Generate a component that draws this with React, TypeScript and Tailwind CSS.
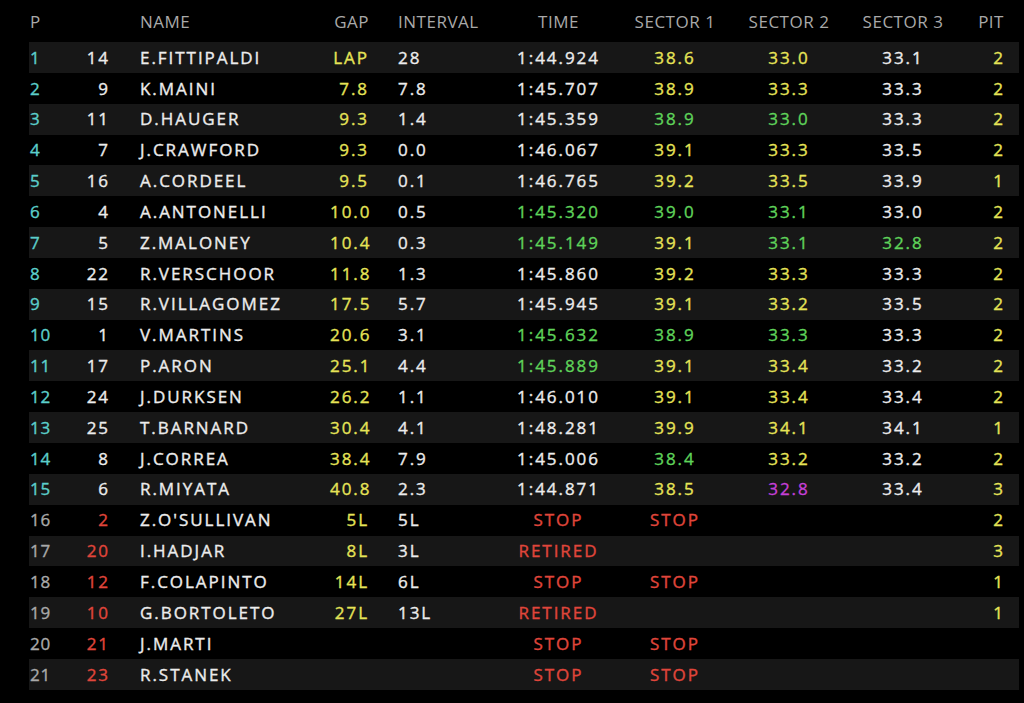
type C = 'w' | 'y' | 'g' | 'p' | 'r' | '';

interface Row {
    pos: number;
    num: string;
    numRed?: boolean;
    name: string;
    gap: string;
    interval: string;
    time: [string, C];
    s1: [string, C];
    s2: [string, C];
    s3: [string, C];
    pit: string;
}

const colorClass: Record<C, string> = {
    w: 'text-[#ececec]',
    y: 'text-[#e6e457]',
    g: 'text-[#5fd35a]',
    p: 'text-[#c640d8]',
    r: 'text-[#e0463b]',
    '': '',
};

const rows: Row[] = [
    { pos: 1, num: '14', name: 'E.FITTIPALDI', gap: 'LAP', interval: '28', time: ['1:44.924', 'w'], s1: ['38.6', 'y'], s2: ['33.0', 'y'], s3: ['33.1', 'w'], pit: '2' },
    { pos: 2, num: '9', name: 'K.MAINI', gap: '7.8', interval: '7.8', time: ['1:45.707', 'w'], s1: ['38.9', 'y'], s2: ['33.3', 'y'], s3: ['33.3', 'w'], pit: '2' },
    { pos: 3, num: '11', name: 'D.HAUGER', gap: '9.3', interval: '1.4', time: ['1:45.359', 'w'], s1: ['38.9', 'g'], s2: ['33.0', 'g'], s3: ['33.3', 'w'], pit: '2' },
    { pos: 4, num: '7', name: 'J.CRAWFORD', gap: '9.3', interval: '0.0', time: ['1:46.067', 'w'], s1: ['39.1', 'y'], s2: ['33.3', 'y'], s3: ['33.5', 'w'], pit: '2' },
    { pos: 5, num: '16', name: 'A.CORDEEL', gap: '9.5', interval: '0.1', time: ['1:46.765', 'w'], s1: ['39.2', 'y'], s2: ['33.5', 'y'], s3: ['33.9', 'w'], pit: '1' },
    { pos: 6, num: '4', name: 'A.ANTONELLI', gap: '10.0', interval: '0.5', time: ['1:45.320', 'g'], s1: ['39.0', 'g'], s2: ['33.1', 'g'], s3: ['33.0', 'w'], pit: '2' },
    { pos: 7, num: '5', name: 'Z.MALONEY', gap: '10.4', interval: '0.3', time: ['1:45.149', 'g'], s1: ['39.1', 'y'], s2: ['33.1', 'g'], s3: ['32.8', 'g'], pit: '2' },
    { pos: 8, num: '22', name: 'R.VERSCHOOR', gap: '11.8', interval: '1.3', time: ['1:45.860', 'w'], s1: ['39.2', 'y'], s2: ['33.3', 'y'], s3: ['33.3', 'w'], pit: '2' },
    { pos: 9, num: '15', name: 'R.VILLAGOMEZ', gap: '17.5', interval: '5.7', time: ['1:45.945', 'w'], s1: ['39.1', 'y'], s2: ['33.2', 'y'], s3: ['33.5', 'w'], pit: '2' },
    { pos: 10, num: '1', name: 'V.MARTINS', gap: '20.6', interval: '3.1', time: ['1:45.632', 'g'], s1: ['38.9', 'g'], s2: ['33.3', 'g'], s3: ['33.3', 'w'], pit: '2' },
    { pos: 11, num: '17', name: 'P.ARON', gap: '25.1', interval: '4.4', time: ['1:45.889', 'g'], s1: ['39.1', 'y'], s2: ['33.4', 'y'], s3: ['33.2', 'w'], pit: '2' },
    { pos: 12, num: '24', name: 'J.DURKSEN', gap: '26.2', interval: '1.1', time: ['1:46.010', 'w'], s1: ['39.1', 'y'], s2: ['33.4', 'y'], s3: ['33.4', 'w'], pit: '2' },
    { pos: 13, num: '25', name: 'T.BARNARD', gap: '30.4', interval: '4.1', time: ['1:48.281', 'w'], s1: ['39.9', 'y'], s2: ['34.1', 'y'], s3: ['34.1', 'w'], pit: '1' },
    { pos: 14, num: '8', name: 'J.CORREA', gap: '38.4', interval: '7.9', time: ['1:45.006', 'w'], s1: ['38.4', 'g'], s2: ['33.2', 'y'], s3: ['33.2', 'w'], pit: '2' },
    { pos: 15, num: '6', name: 'R.MIYATA', gap: '40.8', interval: '2.3', time: ['1:44.871', 'w'], s1: ['38.5', 'y'], s2: ['32.8', 'p'], s3: ['33.4', 'w'], pit: '3' },
    { pos: 16, num: '2', numRed: true, name: "Z.O'SULLIVAN", gap: '5L', interval: '5L', time: ['STOP', 'r'], s1: ['STOP', 'r'], s2: ['', ''], s3: ['', ''], pit: '2' },
    { pos: 17, num: '20', numRed: true, name: 'I.HADJAR', gap: '8L', interval: '3L', time: ['RETIRED', 'r'], s1: ['', ''], s2: ['', ''], s3: ['', ''], pit: '3' },
    { pos: 18, num: '12', numRed: true, name: 'F.COLAPINTO', gap: '14L', interval: '6L', time: ['STOP', 'r'], s1: ['STOP', 'r'], s2: ['', ''], s3: ['', ''], pit: '1' },
    { pos: 19, num: '10', numRed: true, name: 'G.BORTOLETO', gap: '27L', interval: '13L', time: ['RETIRED', 'r'], s1: ['', ''], s2: ['', ''], s3: ['', ''], pit: '1' },
    { pos: 20, num: '21', numRed: true, name: 'J.MARTI', gap: '', interval: '', time: ['STOP', 'r'], s1: ['STOP', 'r'], s2: ['', ''], s3: ['', ''], pit: '' },
    { pos: 21, num: '23', numRed: true, name: 'R.STANEK', gap: '', interval: '', time: ['STOP', 'r'], s1: ['STOP', 'r'], s2: ['', ''], s3: ['', ''], pit: '' },
];

const grid =
    'grid grid-cols-[41px_40px_220px_39px_131px_117px_116px_112px_116px_58px] items-center';

export default function App() {
    return (
        <div className="h-[703px] w-[1024px] overflow-hidden bg-black font-['Open_Sans',sans-serif] text-[17px]">
            <div className="ml-[29px] w-[990px]">
                <div className={`${grid} h-[42px] pt-[2px] tracking-[0.03em] text-[#a9a9a9]`}>
                    <div className="pl-px">P</div>
                    <div />
                    <div className="pl-[30px]">NAME</div>
                    <div className="text-right">GAP</div>
                    <div className="pl-[29px]">INTERVAL</div>
                    <div className="text-center">TIME</div>
                    <div className="text-center">SECTOR 1</div>
                    <div className="text-center">SECTOR 2</div>
                    <div className="text-center">SECTOR 3</div>
                    <div className="pr-[15px] text-right">PIT</div>
                </div>

                {rows.map((r) => (
                    <div
                        key={r.pos}
                        className={`${grid} h-[30.85px] tracking-[0.115em] [-webkit-text-stroke:0.35px_currentColor] ${
                            r.pos % 2 === 1 ? 'bg-[#171717]' : 'bg-black'
                        }`}
                    >
                        <div
                            className={`pl-px tracking-[0.04em] ${
                                r.pos <= 15 ? 'text-[#5ccfcb]' : 'text-[#a9a9a9]'
                            }`}
                        >
                            {r.pos}
                        </div>
                        <div className={`text-right ${r.numRed ? colorClass.r : colorClass.w}`}>
                            {r.num}
                        </div>
                        <div className={`pl-[30px] ${colorClass.w}`}>{r.name}</div>
                        <div className={`text-right ${colorClass.y}`}>{r.gap}</div>
                        <div className={`pl-[29px] ${colorClass.w}`}>{r.interval}</div>
                        <div className={`text-center ${colorClass[r.time[1]]}`}>{r.time[0]}</div>
                        <div className={`text-center ${colorClass[r.s1[1]]}`}>{r.s1[0]}</div>
                        <div className={`text-center ${colorClass[r.s2[1]]}`}>{r.s2[0]}</div>
                        <div className={`text-center ${colorClass[r.s3[1]]}`}>{r.s3[0]}</div>
                        <div className={`pr-[14px] text-right ${colorClass.y}`}>{r.pit}</div>
                    </div>
                ))}
            </div>
        </div>
    );
}
